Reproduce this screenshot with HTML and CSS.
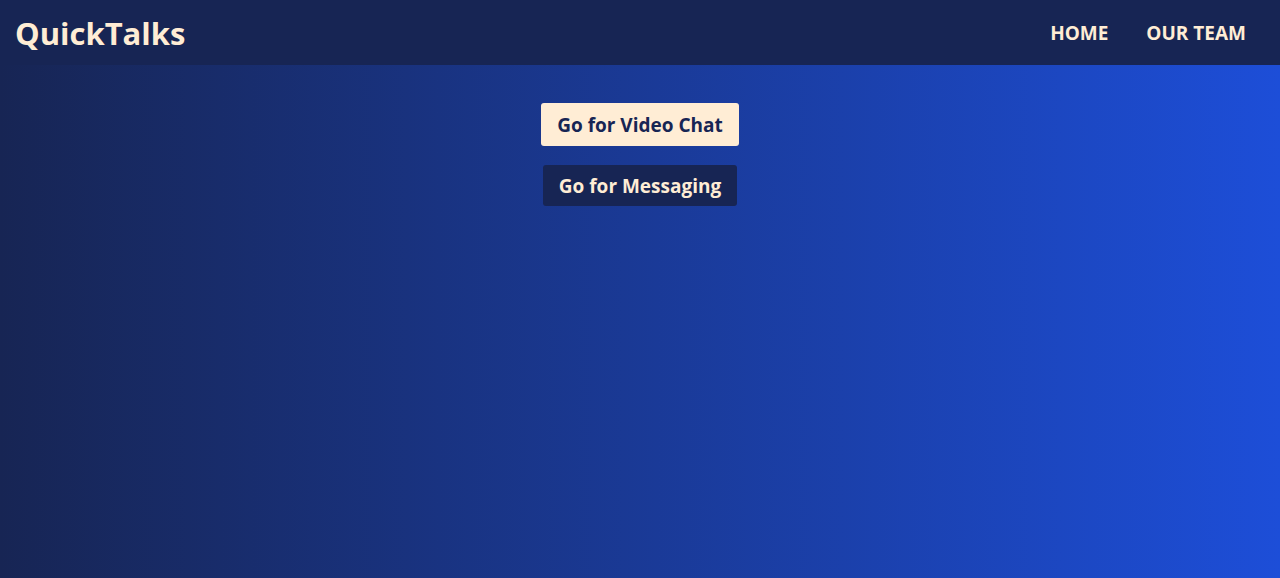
FILE: index.html
```html
<!DOCTYPE html>
<html>
<head>
<meta charset="utf-8">
<link rel="stylesheet" href="styles.css">
</head>
<body>
<header class="topbar">
  <div class="logo">QuickTalks</div>
  <nav class="nav">
    <a class="nav-link" href="#">HOME</a>
    <a class="nav-link" href="#">OUR TEAM</a>
  </nav>
</header>
<main class="main">
  <button class="btn btn-light">Go for Video Chat</button>
  <button class="btn btn-dark">Go for Messaging</button>
</main>
</body>
</html>
```
FILE: styles.css
```css
html, body {
  margin: 0;
  padding: 0;
  height: 100%;
}
body {
  font-family: "Open Sans", "Noto Sans", sans-serif;
  background: linear-gradient(to right, #172554, #1d4ed8);
  display: flex;
  flex-direction: column;
}
.topbar {
  height: 65px;
  background: #172554;
  display: flex;
  align-items: center;
  justify-content: space-between;
  padding: 0 34px 0 15px;
  box-sizing: border-box;
}
.logo {
  color: #ffedd5;
  font-size: 31px;
  font-weight: 700;
}
.nav {
  display: flex;
  gap: 38px;
}
.nav-link {
  color: #ffedd5;
  font-size: 19px;
  font-weight: 700;
  text-decoration: none;
}
.main {
  flex: 1;
  display: flex;
  flex-direction: column;
  align-items: center;
  padding-top: 38px;
  gap: 19px;
}
.btn {
  font-family: inherit;
  font-size: 19px;
  font-weight: 700;
  border: none;
  border-radius: 3px;
  padding: 0 16px;
  cursor: pointer;
}
.btn-light {
  background: #ffedd5;
  color: #172554;
  height: 43px;
}
.btn-dark {
  background: #172554;
  color: #ffedd5;
  height: 41px;
}
```
